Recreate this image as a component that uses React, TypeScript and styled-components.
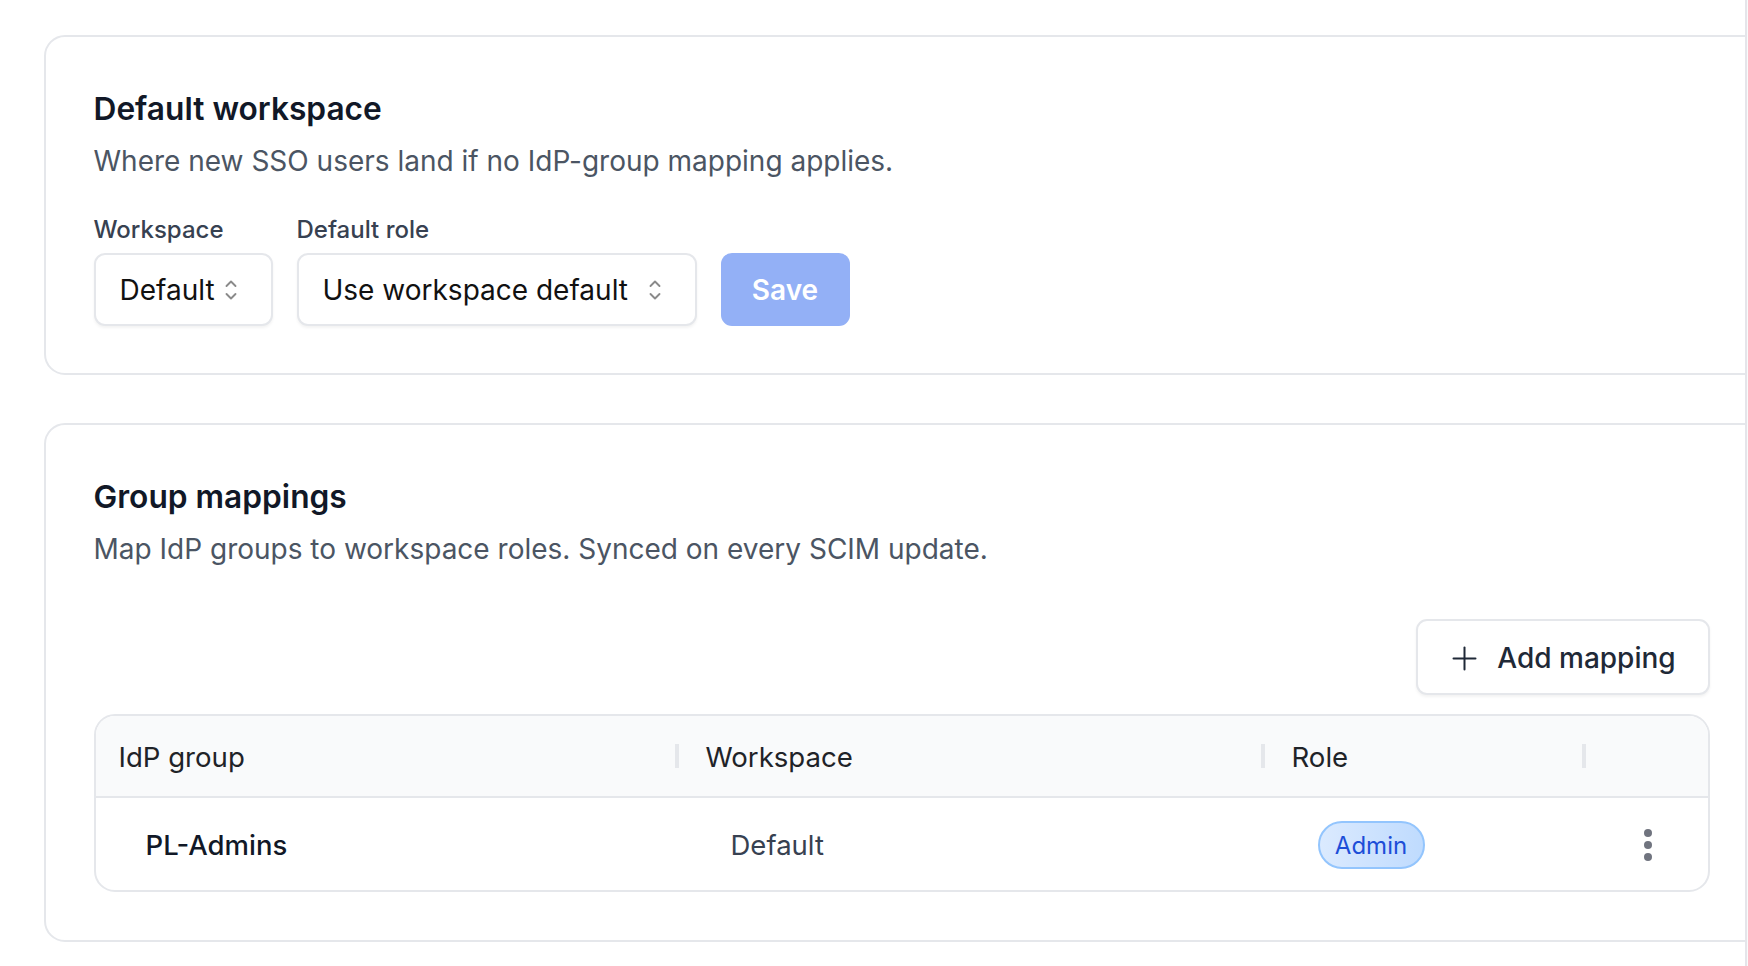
import React from 'react';
import styled, { createGlobalStyle } from 'styled-components';

const GlobalStyle = createGlobalStyle`
  html, body {
    margin: 0;
    background: #fafafa;
    overflow: hidden;
  }
  body {
    font-family: Inter, "Liberation Sans", sans-serif;
    color: #111827;
  }
`;

const Page = styled.div`
  width: 1747px;
  height: 966px;
  box-sizing: border-box;
  padding: 35px 0 0 44px;
  display: flex;
  flex-direction: column;
  gap: 48px;
  overflow: hidden;
  background: #ffffff;
  border-right: 2px solid #e5e5ea;
`;

const Card = styled.section`
  box-sizing: border-box;
  width: 1720px;
  padding: 51px 48px 47px 47.5px;
  border: 2px solid #e5e7eb;
  border-radius: 21px;
  background: #ffffff;

  & + & {
    padding-bottom: 48px;
  }
`;

const Title = styled.h2`
  margin: 0;
  font-size: 31.7px;
  line-height: 42px;
  font-weight: 600;
  color: #111827;
`;

const Description = styled.p`
  margin: 10px 0 0;
  font-size: 28px;
  line-height: 42px;
  font-weight: 400;
  color: #4b5563;
`;

const FormRow = styled.div`
  margin-top: 30px;
  display: flex;
  align-items: flex-end;
  gap: 24px;
`;

const Field = styled.label`
  display: flex;
  flex-direction: column;
  gap: 6px;
`;

const FieldLabel = styled.span`
  font-size: 24px;
  line-height: 35px;
  font-weight: 500;
  color: #374151;
`;

const SelectBox = styled.div<{ $width: number }>`
  box-sizing: border-box;
  width: ${(p) => p.$width}px;
  height: 73px;
  padding: 0 32px 0 24px;
  display: flex;
  align-items: center;
  justify-content: space-between;
  border: 2px solid #e5e7eb;
  border-radius: 11px;
  background: #ffffff;
  box-shadow: 0 2px 3px rgba(0, 0, 0, 0.05);
  font-size: 28px;
  color: #111111;
`;

const SaveButton = styled.button`
  width: 129px;
  height: 73px;
  border: 0;
  border-radius: 11px;
  background: #93b0f6;
  color: #ffffff;
  font-family: inherit;
  font-size: 28px;
  font-weight: 600;
`;

const Toolbar = styled.div`
  width: 1616px;
  margin-top: 49px;
  display: flex;
  justify-content: flex-end;
`;

const AddButton = styled.button`
  box-sizing: border-box;
  width: 294px;
  height: 76px;
  padding: 2px 0 0 3px;
  display: flex;
  align-items: center;
  justify-content: center;
  gap: 20px;
  border: 2px solid #e5e7eb;
  border-radius: 11px;
  background: #ffffff;
  box-shadow: 0 2px 3px rgba(0, 0, 0, 0.05);
  font-family: inherit;
  font-size: 28px;
  font-weight: 500;
  color: #1f2937;
`;

const Table = styled.div`
  box-sizing: border-box;
  width: 1616px;
  margin-top: 19px;
  border: 2px solid #e5e7eb;
  border-radius: 21px;
  overflow: hidden;
`;

const Row = styled.div`
  display: grid;
  grid-template-columns: 587px 586px 321px 1fr;
  align-items: center;
`;

const HeaderRow = styled(Row)`
  height: 80px;
  background: #f9fafb;
  border-bottom: 2px solid #e5e7eb;
`;

const BodyRow = styled(Row)`
  box-sizing: border-box;
  height: 92px;
  padding-top: 2px;
`;

const HeaderCell = styled.div`
  position: relative;
  padding: 2px 0 0 23px;
  font-size: 27.6px;
  font-weight: 400;
  color: #1f2328;

  &::after {
    content: '';
    position: absolute;
    right: 4px;
    top: 50%;
    width: 4px;
    height: 24px;
    margin-top: -12px;
    background: #e5e7eb;
  }
`;

const BodyCell = styled.div<{ $strong?: boolean }>`
  padding-left: ${(p) => (p.$strong ? 50 : 48)}px;
  font-size: 27.5px;
  font-weight: ${(p) => (p.$strong ? 500 : 400)};
  color: ${(p) => (p.$strong ? '#111827' : '#374151')};
`;

const BadgeCell = styled.div`
  display: flex;
  padding-left: 49px;
`;

const ActionCell = styled.div`
  display: flex;
  justify-content: flex-end;
  padding-right: 55px;
`;

const Badge = styled.span`
  box-sizing: border-box;
  display: inline-flex;
  align-items: center;
  justify-content: center;
  width: 107px;
  height: 48px;
  border: 2px solid #93c5fd;
  border-radius: 24px;
  background: linear-gradient(90deg, #dbeafe, #bfdbfe);
  font-size: 24px;
  color: #1d4ed8;
`;

const Chevrons = () => (
  <svg width="16" height="24" viewBox="0 0 16 24" fill="none" stroke="#8a8a8a" strokeWidth="1.9" strokeLinecap="round" strokeLinejoin="round">
    <path d="M3.5 8 8 3.5 12.5 8" />
    <path d="M3.5 16 8 20.5 12.5 16" />
  </svg>
);

const PlusIcon = () => (
  <svg width="25" height="25" viewBox="0 0 25 25" fill="none" stroke="#1f2937" strokeWidth="2" strokeLinecap="round">
    <path d="M12.5 1.5v22" />
    <path d="M1.5 12.5h22" />
  </svg>
);

const Kebab = () => (
  <svg width="10" height="34" viewBox="0 0 10 34" fill="#70747f">
    <circle cx="5" cy="5" r="4" />
    <circle cx="5" cy="17" r="4" />
    <circle cx="5" cy="29" r="4" />
  </svg>
);

export default function App() {
  return (
    <>
      <GlobalStyle />
      <Page>
        <Card>
          <Title>Default workspace</Title>
          <Description>Where new SSO users land if no IdP-group mapping applies.</Description>
          <FormRow>
            <Field>
              <FieldLabel>Workspace</FieldLabel>
              <SelectBox $width={179}>
                Default
                <Chevrons />
              </SelectBox>
            </Field>
            <Field>
              <FieldLabel>Default role</FieldLabel>
              <SelectBox $width={400}>
                Use workspace default
                <Chevrons />
              </SelectBox>
            </Field>
            <SaveButton>Save</SaveButton>
          </FormRow>
        </Card>
        <Card>
          <Title>Group mappings</Title>
          <Description>Map IdP groups to workspace roles. Synced on every SCIM update.</Description>
          <Toolbar>
            <AddButton>
              <PlusIcon />
              Add mapping
            </AddButton>
          </Toolbar>
          <Table>
            <HeaderRow>
              <HeaderCell>IdP group</HeaderCell>
              <HeaderCell>Workspace</HeaderCell>
              <HeaderCell>Role</HeaderCell>
              <div />
            </HeaderRow>
            <BodyRow>
              <BodyCell $strong>PL-Admins</BodyCell>
              <BodyCell>Default</BodyCell>
              <BadgeCell>
                <Badge>Admin</Badge>
              </BadgeCell>
              <ActionCell>
                <Kebab />
              </ActionCell>
            </BodyRow>
          </Table>
        </Card>
      </Page>
    </>
  );
}
